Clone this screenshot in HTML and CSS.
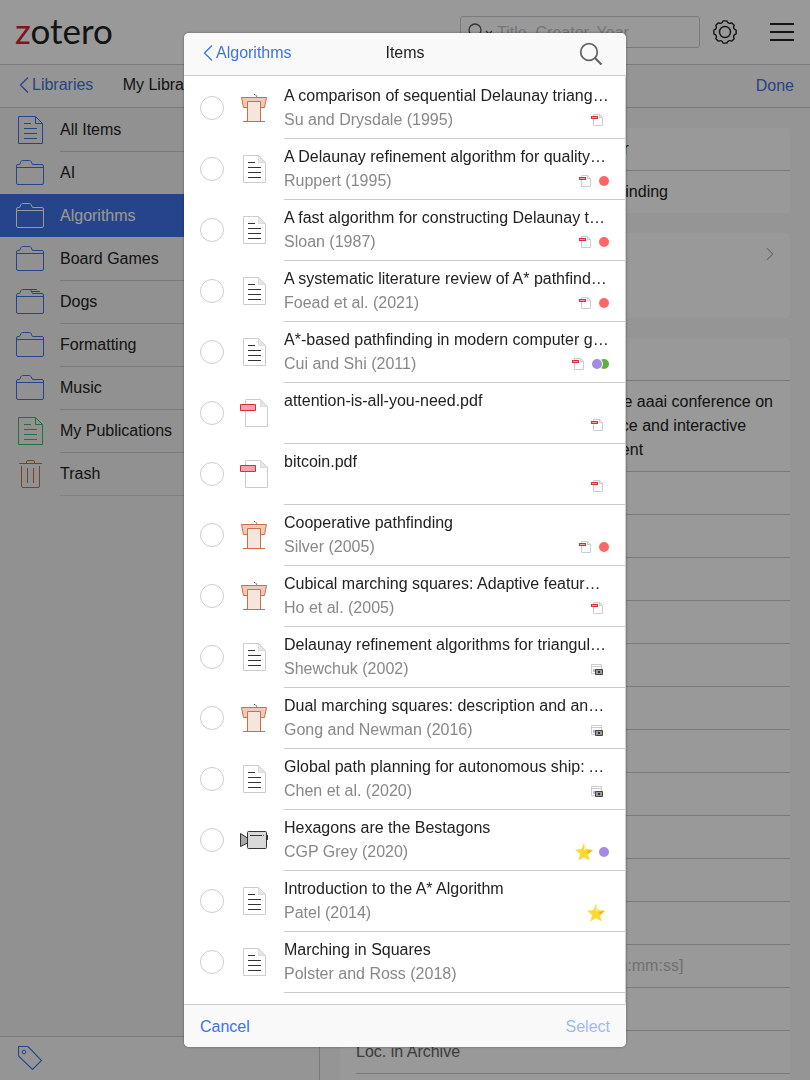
FILE: index.html
```html
<!DOCTYPE html>
<html lang="en">
<head>
<meta charset="utf-8">
<meta name="viewport" content="width=device-width, initial-scale=1">
<title>Zotero</title>
<link rel="stylesheet" href="styles.css">
</head>
<body>
<svg class="sprite" aria-hidden="true">
  <symbol id="doc-outline" viewBox="0 0 28 28"><path d="M2.500.5h17l7 7v20h-24zM19.500.5v7h7M8 7.500h7M8 12.500h13M8 17.500h13M8 22.500h13" fill="none" stroke="currentColor"/></symbol>
  <symbol id="folder" viewBox="0 0 28 28"><path d="M.5 9V7q0-1.500 1.500-1.500h1.500L5 2.500q.5-1 1.500-1h7q1 0 1.500 1l1.500 3H26q1.500 0 1.500 1.500v17q0 1.500-1.500 1.500H2Q.5 25.500 .5 24V8.500h27" fill="none" stroke="currentColor"/></symbol>
  <symbol id="folders" viewBox="0 0 28 28"><path d="M.5 9V7q0-1.500 1.500-1.500h1.500L5 2.500q.5-1 1.500-1H21M14.500 1.500l2 4H26q1.500 0 1.500 1.500v17q0 1.500-1.500 1.500H2Q.5 25.500 .5 24V8.500h27M15.500 3.500h8.500" fill="none" stroke="currentColor"/></symbol>
  <symbol id="trash" viewBox="0 0 28 28"><path d="M3 3.500h23M10.500 3.500V2q0-1.500 1.500-1.500h5q1.500 0 1.500 1.500v1.500M5.500 6v20q0 1.500 1.500 1.500h15q1.500 0 1.500-1.500V6M11.500 8v15M17.500 8v15" fill="none" stroke="currentColor"/></symbol>
  <symbol id="chevron" viewBox="0 0 10 18"><path d="M9 1.500 1.500 9 9 16.500" fill="none" stroke="currentColor" stroke-width="1.300"/></symbol>
  <symbol id="article" viewBox="0 0 28 28"><path d="M3.500.5h15l7 7v20h-22z" fill="#fff" stroke="#ccc"/><path d="M18.500.5v7h7z" fill="#e6e6e6" stroke="#ccc" stroke-width=".6"/><path d="M8 7.500h7M8 12.500h13M8 17.500h13M8 22.500h13" stroke="#333"/></symbol>
  <symbol id="pdf" viewBox="0 0 28 28"><path d="M5.500.5h15l7 7v20h-22z" fill="#fff" stroke="#ccc"/><path d="M20.500.5v7h7z" fill="#e6e6e6" stroke="#ccc" stroke-width=".6"/><path d="M.5 5.500h15v6H.5z" fill="#f5a3ab" stroke="#db2c3a"/></symbol>
  <symbol id="conference" viewBox="0 0 28 28"><path d="M14 0l3 2.500" stroke="#333" stroke-dasharray="1.600 .7"/><path d="M1.500 3.500h25l-2 10h-21z" fill="#efcab9" stroke="#cc6f46"/><path d="M7.500 28V7.500h13V28" fill="#f6e5dd" stroke="#cc6f46"/><path d="M3 27.500h22" stroke="#cc6f46"/></symbol>
  <symbol id="video" viewBox="0 0 28 28"><path d="M.5 7.500 7.500 12v5L.5 20.500z" fill="#aaa" stroke="#333"/><rect x="7.500" y="5.500" width="19" height="17" rx="1" fill="#d9d9d9" stroke="#333"/><path d="M10 9.500h14" stroke="#333"/><path d="M22 9.500h1" stroke="#d9d9d9"/><path d="M23 9.500h1" stroke="#db2c3a"/><path d="M27.500 9v5" stroke="#333"/></symbol>
  <symbol id="pdf-small" viewBox="0 0 12 12"><path d="M2.500.5h6l3 3v8h-9zM8.500.5v3h3" fill="none" stroke="#ccc"/><path d="M0 2h7v3H0z" fill="#db2c3a"/><path d="M1 3.500h5" stroke="#f5a3ab"/></symbol>
  <symbol id="snapshot" viewBox="0 0 12 12"><path d="M.5 1.500h10v9H.5zM.5 3.500h10" fill="#fff" stroke="#ccc"/><path d="M2 6h3v3H2z" fill="#a3c0f5"/><path d="M4.500 6.500h7v5h-7z" fill="#999" stroke="#444"/><path d="M7 8h2v2H7z" fill="#333"/></symbol>
  <symbol id="star" viewBox="0 0 18 18"><path d="M9 0l2.500 6 6.500.7-5 4.300 1.600 6.600L9 14.200l-5.600 3.400L5 11 0 6.700 6.500 6z" fill="#fdd835"/><path d="M9 0l2.200 6L9 8z" fill="#fff59d"/><path d="M18 6.700 13 11l-1-3z" fill="#f4b400"/></symbol>
  <symbol id="magnifier" viewBox="0 0 24 24"><circle cx="10" cy="10" r="8.300" fill="none" stroke="currentColor" stroke-width="1.800"/><path d="m16 16 6.500 6.500" stroke="currentColor" stroke-width="2.200"/></symbol>
</svg>

<div class="app">
  <header class="site-header">
    <a class="brand" href="#"><span class="brand-z">z</span>otero</a>
    <div class="site-tools">
      <div class="search-box">
        <svg class="search-icon" viewBox="0 0 24 18" aria-hidden="true"><circle cx="7" cy="7" r="6" fill="none" stroke="currentColor" stroke-width="1.300"/><path d="m11.500 11.500 4.500 4.500m2-8 3 3 3-3" fill="none" stroke="currentColor" stroke-width="1.300"/></svg>
        <input type="search" aria-label="Search" placeholder="Title, Creator, Year">
      </div>
      <button class="tool" aria-label="Settings"><svg class="icon-tool" viewBox="0 0 24 24" aria-hidden="true"><path d="M10.230.84H13.770Q15.100 4.600 18.640 2.860L21.140 5.360Q19.400 8.900 23.160 10.230V13.770Q19.400 15.100 21.140 18.640L18.640 21.140Q15.100 19.400 13.770 23.160H10.230Q8.900 19.400 5.360 21.140L2.860 18.640Q4.600 15.100.84 13.770V10.230Q4.600 8.900 2.860 5.360L5.360 2.860Q8.900 4.600 10.230.84Z" fill="none" stroke="currentColor" stroke-width="1.400" stroke-linejoin="round"/><circle cx="12" cy="12" r="5.500" fill="none" stroke="currentColor" stroke-width="1.400"/></svg></button>
      <button class="tool" aria-label="Menu"><svg class="icon-tool" viewBox="0 0 24 24" aria-hidden="true"><path d="M0 4h24M0 12h24M0 20h24" stroke="currentColor" stroke-width="2"/></svg></button>
    </div>
  </header>
  <nav class="touch-bar">
    <div class="touch-side"><a class="back" href="#"><svg class="icon-chevron" aria-hidden="true"><use href="#chevron"/></svg>Libraries</a><span class="touch-title">My Library</span></div>
    <button class="link-button">Done</button>
  </nav>
  <div class="panes">
    <aside class="sidebar">
      <ul class="collections">
        <li><a href="#"><svg class="icon blue"><use href="#doc-outline"/></svg><span>All Items</span></a></li>
        <li><a href="#"><svg class="icon blue"><use href="#folder"/></svg><span>AI</span></a></li>
        <li class="selected"><a href="#"><svg class="icon"><use href="#folder"/></svg><span>Algorithms</span></a></li>
        <li><a href="#"><svg class="icon blue"><use href="#folder"/></svg><span>Board Games</span></a></li>
        <li><a href="#"><svg class="icon blue"><use href="#folders"/></svg><span>Dogs</span></a></li>
        <li><a href="#"><svg class="icon blue"><use href="#folder"/></svg><span>Formatting</span></a></li>
        <li><a href="#"><svg class="icon blue"><use href="#folder"/></svg><span>Music</span></a></li>
        <li><a href="#"><svg class="icon green"><use href="#doc-outline"/></svg><span>My Publications</span></a></li>
        <li><a href="#"><svg class="icon rust"><use href="#trash"/></svg><span>Trash</span></a></li>
        <li class="list-end"></li>
      </ul>
      <div class="tag-bar"><button class="tool" aria-label="Tags"><svg class="icon-tag" viewBox="0 0 24 24" aria-hidden="true"><path d="M.5.5h9.500L23.500 14.500 14.500 23.500.5 10z" fill="none" stroke="currentColor" stroke-width="1.100"/><circle cx="6" cy="6" r="1.800" fill="none" stroke="currentColor"/></svg></button></div>
    </aside>
    <main class="details">
      <dl class="card">
        <div class="field"><dt>Item Type</dt><dd>Conference Paper</dd></div>
        <div class="field"><dt>Title</dt><dd>Cooperative pathfinding</dd></div>
      </dl>
      <dl class="card">
        <div class="field plain"><dt>Author</dt><dd>Silver, David</dd><svg class="icon-more" aria-hidden="true"><use href="#chevron"/></svg></div>
        <div class="field"><dt>Add Author</dt><dd></dd></div>
      </dl>
      <dl class="card">
        <div class="field"><dt>Date</dt><dd>2005</dd></div>
        <div class="field"><dt>Proceedings</dt><dd>Proceedings of the aaai conference on artificial intelligence and interactive digital entertainment</dd></div>
        <div class="field"><dt>Conference</dt><dd></dd></div>
        <div class="field"><dt>Place</dt><dd></dd></div>
        <div class="field"><dt>Publisher</dt><dd></dd></div>
        <div class="field"><dt>Volume</dt><dd>1</dd></div>
        <div class="field"><dt>Pages</dt><dd>117–122</dd></div>
        <div class="field"><dt>Series</dt><dd></dd></div>
        <div class="field"><dt>Language</dt><dd></dd></div>
        <div class="field"><dt>DOI</dt><dd></dd></div>
        <div class="field"><dt>ISBN</dt><dd></dd></div>
        <div class="field"><dt>Short Title</dt><dd></dd></div>
        <div class="field"><dt>URL</dt><dd></dd></div>
        <div class="field"><dt>Accessed</dt><dd class="hint">YYYY-MM-DD [hh:mm:ss]</dd></div>
        <div class="field"><dt>Archive</dt><dd></dd></div>
        <div class="field"><dt>Loc. in Archive</dt><dd></dd></div>
        <div class="field"><dt></dt><dd></dd></div>
      </dl>
    </main>
  </div>
</div>

<div class="backdrop">
  <section class="dialog" role="dialog" aria-modal="true" aria-labelledby="dialog-title">
    <header class="dialog-header">
      <a class="back" href="#"><svg class="icon-chevron" aria-hidden="true"><use href="#chevron"/></svg>Algorithms</a>
      <h1 id="dialog-title">Items</h1>
      <button class="tool find" aria-label="Search items"><svg class="icon-tool" aria-hidden="true"><use href="#magnifier"/></svg></button>
    </header>
    <ul class="items">
      <li><label class="item"><input type="checkbox"><svg class="icon"><use href="#conference"/></svg><span class="text"><span class="title">A comparison of sequential Delaunay triangulation algorithms</span><span class="meta"><span class="by">Su and Drysdale (1995)</span><span class="marks"><svg class="mini"><use href="#pdf-small"/></svg></span></span></span></label></li>
      <li><label class="item"><input type="checkbox"><svg class="icon"><use href="#article"/></svg><span class="text"><span class="title">A Delaunay refinement algorithm for quality 2-dimensional mesh generation</span><span class="meta"><span class="by">Ruppert (1995)</span><span class="marks tagged"><svg class="mini"><use href="#pdf-small"/></svg><i class="dot red"></i></span></span></span></label></li>
      <li><label class="item"><input type="checkbox"><svg class="icon"><use href="#article"/></svg><span class="text"><span class="title">A fast algorithm for constructing Delaunay triangulations in the plane</span><span class="meta"><span class="by">Sloan (1987)</span><span class="marks tagged"><svg class="mini"><use href="#pdf-small"/></svg><i class="dot red"></i></span></span></span></label></li>
      <li><label class="item"><input type="checkbox"><svg class="icon"><use href="#article"/></svg><span class="text"><span class="title">A systematic literature review of A* pathfinding</span><span class="meta"><span class="by">Foead et al. (2021)</span><span class="marks tagged"><svg class="mini"><use href="#pdf-small"/></svg><i class="dot red"></i></span></span></span></label></li>
      <li><label class="item"><input type="checkbox"><svg class="icon"><use href="#article"/></svg><span class="text"><span class="title">A*-based pathfinding in modern computer games</span><span class="meta"><span class="by">Cui and Shi (2011)</span><span class="marks tagged"><svg class="mini"><use href="#pdf-small"/></svg><span class="dots"><i class="dot purple"></i><i class="dot green-dot"></i></span></span></span></span></label></li>
      <li><label class="item"><input type="checkbox"><svg class="icon"><use href="#pdf"/></svg><span class="text"><span class="title">attention-is-all-you-need.pdf</span><span class="meta"><span class="by"></span><span class="marks"><svg class="mini"><use href="#pdf-small"/></svg></span></span></span></label></li>
      <li><label class="item"><input type="checkbox"><svg class="icon"><use href="#pdf"/></svg><span class="text"><span class="title">bitcoin.pdf</span><span class="meta"><span class="by"></span><span class="marks"><svg class="mini"><use href="#pdf-small"/></svg></span></span></span></label></li>
      <li><label class="item"><input type="checkbox"><svg class="icon"><use href="#conference"/></svg><span class="text"><span class="title">Cooperative pathfinding</span><span class="meta"><span class="by">Silver (2005)</span><span class="marks tagged"><svg class="mini"><use href="#pdf-small"/></svg><i class="dot red"></i></span></span></span></label></li>
      <li><label class="item"><input type="checkbox"><svg class="icon"><use href="#conference"/></svg><span class="text"><span class="title">Cubical marching squares: Adaptive feature preserving surface extraction</span><span class="meta"><span class="by">Ho et al. (2005)</span><span class="marks"><svg class="mini"><use href="#pdf-small"/></svg></span></span></span></label></li>
      <li><label class="item"><input type="checkbox"><svg class="icon"><use href="#article"/></svg><span class="text"><span class="title">Delaunay refinement algorithms for triangular mesh generation</span><span class="meta"><span class="by">Shewchuk (2002)</span><span class="marks"><svg class="mini"><use href="#snapshot"/></svg></span></span></span></label></li>
      <li><label class="item"><input type="checkbox"><svg class="icon"><use href="#conference"/></svg><span class="text"><span class="title">Dual marching squares: description and analysis</span><span class="meta"><span class="by">Gong and Newman (2016)</span><span class="marks"><svg class="mini"><use href="#snapshot"/></svg></span></span></span></label></li>
      <li><label class="item"><input type="checkbox"><svg class="icon"><use href="#article"/></svg><span class="text"><span class="title">Global path planning for autonomous ship: A hybrid approach</span><span class="meta"><span class="by">Chen et al. (2020)</span><span class="marks"><svg class="mini"><use href="#snapshot"/></svg></span></span></span></label></li>
      <li><label class="item"><input type="checkbox"><svg class="icon"><use href="#video"/></svg><span class="text"><span class="title">Hexagons are the Bestagons</span><span class="meta"><span class="by">CGP Grey (2020)</span><span class="marks starred"><svg class="star"><use href="#star"/></svg><i class="dot purple"></i></span></span></span></label></li>
      <li><label class="item"><input type="checkbox"><svg class="icon"><use href="#article"/></svg><span class="text"><span class="title">Introduction to the A* Algorithm</span><span class="meta"><span class="by">Patel (2014)</span><span class="marks star-only"><svg class="star"><use href="#star"/></svg></span></span></span></label></li>
      <li><label class="item"><input type="checkbox"><svg class="icon"><use href="#article"/></svg><span class="text"><span class="title">Marching in Squares</span><span class="meta"><span class="by">Polster and Ross (2018)</span></span></span></label></li>
    </ul>
    <footer class="dialog-footer">
      <button class="link-button">Cancel</button>
      <button class="link-button" disabled>Select</button>
    </footer>
  </section>
</div>
</body>
</html>
```
FILE: styles.css
```css
* { box-sizing: border-box; }
body {
  margin: 0;
  font: 16px/24px "Liberation Sans", Arial, sans-serif;
  color: #222;
}
ul, dl, dd, h1 { margin: 0; padding: 0; }
ul { list-style: none; }
a { color: inherit; text-decoration: none; }
button {
  padding: 0;
  border: 0;
  background: none;
  font: inherit;
  color: inherit;
}
svg { display: block; flex: none; }
.sprite { display: none; }

.app {
  display: flex;
  flex-direction: column;
  height: 100vh;
  overflow: hidden;
}

.site-header {
  display: flex;
  align-items: center;
  justify-content: space-between;
  height: 65px;
  flex: none;
  padding: 0 16px 0 15px;
  border-bottom: 1px solid #ccc;
}
.brand {
  font: 35px/48px Lato, sans-serif;
  padding-bottom: 4px;
}
.brand-z { color: #d8222f; }
.site-tools { display: flex; align-items: center; }
.search-box {
  display: flex;
  align-items: center;
  gap: 5px;
  width: 240px;
  height: 32px;
  margin-right: 13px;
  padding: 0 7px;
  border: 1px solid #ccc;
  border-radius: 3px;
}
.search-icon { width: 24px; height: 18px; color: #555; }
.search-box input {
  width: 100%;
  min-width: 0;
  padding: 1px 0 0;
  border: 0;
  outline: 0;
  background: none;
  font: inherit;
}
.search-box input::placeholder { color: #c4c4c4; }
.tool + .tool { margin-left: 33px; }
.icon-tool { width: 24px; height: 24px; }

.touch-bar {
  display: flex;
  justify-content: space-between;
  align-items: center;
  height: 43px;
  flex: none;
  padding-right: 16px;
  border-bottom: 1px solid #ccc;
  background: #f9f9f9;
}
.touch-side {
  display: grid;
  grid-template-columns: 1fr auto 1fr;
  width: 320px;
  padding: 0 16px 2px;
}
.back {
  display: flex;
  align-items: center;
  gap: 3px;
  padding-left: 3px;
  color: #4072e5;
}
.icon-chevron { width: 10px; height: 18px; }
.link-button { color: #4072e5; }
.link-button:disabled { color: #a0b9f2; }

.panes { display: flex; flex: 1; min-height: 0; }
.sidebar {
  display: flex;
  flex-direction: column;
  flex: none;
  width: 320px;
  border-right: 1px solid #ccc;
  background: #f2f2f2;
}
.collections { flex: 1; }
.collections a {
  display: flex;
  align-items: flex-start;
  gap: 16px;
  padding-left: 16px;
}
.collections .icon { margin-top: 8px; }
.collections span {
  flex: 1;
  padding: 9px 0;
  border-top: 1px solid #ccc;
}
.collections li:first-child span,
.collections .selected span,
.collections .selected + li span { border-color: transparent; }
.collections .selected { background: #4072e5; color: #fff; }
.list-end { margin-left: 60px; border-top: 1px solid #d8d8d8; }
.icon { width: 28px; height: 28px; }
.blue { color: #4072e5; }
.green { color: #39bf68; }
.rust { color: #cc6f46; }
.tag-bar {
  display: flex;
  align-items: center;
  height: 44px;
  padding: 0 0 2px 18px;
  border-top: 1px solid #ccc;
  background: #f9f9f9;
  color: #4072e5;
}
.icon-tag { width: 24px; height: 24px; }

.details {
  flex: 1;
  min-width: 0;
  padding: 20px;
  overflow: hidden;
  background: #f9f9f9;
}
.card {
  margin-bottom: 20px;
  padding-left: 16px;
  border-radius: 4px;
  background: #fff;
}
.field {
  display: flex;
  padding: 9px 16px 9px 0;
  border-bottom: 1px solid #ccc;
}
.field:last-child { border: 0; }
.plain { border-color: transparent; }
.field dt { flex: none; width: 143px; min-height: 24px; color: #666; }
.field dd { flex: 1; }
.field .hint { color: #bbb; white-space: nowrap; }
.icon-more {
  align-self: center;
  width: 8px;
  height: 14px;
  color: #aaa;
  transform: rotate(180deg);
}

.backdrop {
  position: fixed;
  inset: 0;
  display: flex;
  justify-content: center;
  padding: 33px 16px;
  background: rgba(0, 0, 0, .4);
}
.dialog {
  display: flex;
  flex-direction: column;
  width: 100%;
  max-width: 442px;
  border-radius: 5px;
  overflow: hidden;
  background: #fff;
  box-shadow: 0 0 3px rgba(0, 0, 0, .4);
}
.dialog-header, .dialog-footer {
  flex: none;
  height: 43px;
  padding: 0 16px;
  background: #f9f9f9;
}
.dialog-header {
  display: grid;
  grid-template-columns: 1fr auto 1fr;
  align-items: center;
  padding-bottom: 2px;
  border-bottom: 1px solid #ccc;
}
.dialog-header h1 { font-size: 16px; font-weight: normal; }
.find { justify-self: end; margin-right: 7px; padding-top: 2px; color: #666; }
.items {
  flex: 1;
  min-height: 0;
  margin: 1px 0;
  padding-top: 1px;
  overflow: hidden;
  border-right: 1px solid #ccc;
}
.item {
  display: flex;
  align-items: flex-start;
  gap: 16px;
  padding-left: 16px;
}
.item .icon { margin-top: 16px; }
.item input {
  appearance: none;
  flex: none;
  width: 24px;
  height: 24px;
  margin: 18px 0 0;
  border: 1px solid #ccc;
  border-radius: 50%;
}
.text {
  flex: 1;
  min-width: 0;
  padding: 6px 16px 6px 0;
  border-bottom: 1px solid #ccc;
}
.title {
  display: block;
  overflow: hidden;
  text-overflow: ellipsis;
  white-space: nowrap;
}
.meta {
  display: flex;
  justify-content: space-between;
  height: 24px;
  color: #888;
}
.marks { display: flex; align-items: center; gap: 8px; padding-right: 6px; }
.marks.tagged { padding-right: 0; }
.marks.starred { gap: 6px; padding-right: 0; }
.marks.star-only { padding-right: 4px; }
.mini { width: 12px; height: 12px; }
.star { width: 18px; height: 18px; }
.dots { display: flex; }
.dot { width: 10px; height: 10px; border-radius: 50%; }
.dots .dot + .dot { margin-left: -3px; }
.dots .dot:first-child { z-index: 1; box-shadow: 0 0 0 1px #fff; }
.red { background: #ff6666; }
.purple { background: #a28ae5; }
.green-dot { background: #5fb236; }
.dialog-footer {
  display: flex;
  align-items: center;
  justify-content: space-between;
  padding-top: 2px;
  border-top: 1px solid #ccc;
}
```
